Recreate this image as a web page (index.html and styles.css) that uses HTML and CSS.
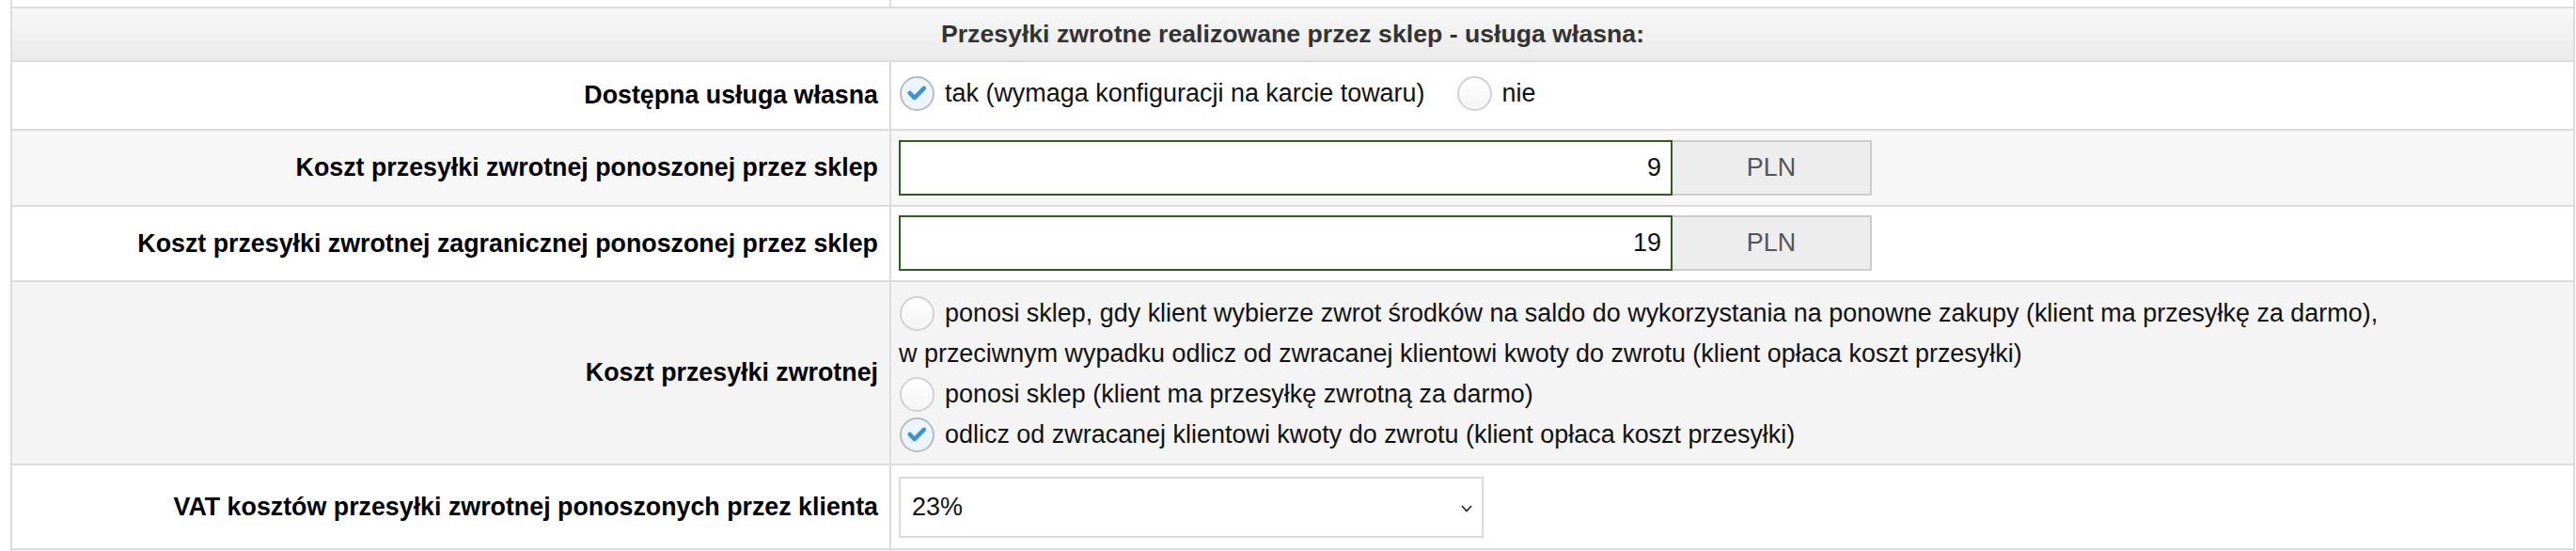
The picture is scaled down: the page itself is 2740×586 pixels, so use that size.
FILE: index.html
```html
<!DOCTYPE html>
<html lang="pl">
<head>
<meta charset="utf-8">
<title>Przesyłki zwrotne</title>
<link rel="stylesheet" href="styles.css">
</head>
<body>
<div class="form">
  <div class="row row-prev">
    <div class="label"></div>
    <div class="value"></div>
  </div>
  <div class="row row-head">
    <div class="head">Przesyłki zwrotne realizowane przez sklep - usługa własna:</div>
  </div>
  <div class="row row-white row-own">
    <div class="label">Dostępna usługa własna</div>
    <div class="value value-inline">
      <label class="opt">
        <span class="radio on"><svg viewBox="0 0 36 36" width="34" height="34"><path d="M9.5 18 L15 23.5 L26 12.5" fill="none" stroke="#3f93cf" stroke-width="5" stroke-linecap="round" stroke-linejoin="round"/></svg></span>
        <span class="opt-text">tak (wymaga konfiguracji na karcie towaru)</span>
      </label>
      <label class="opt">
        <span class="radio"></span>
        <span class="opt-text">nie</span>
      </label>
    </div>
  </div>
  <div class="row row-grey row-cost">
    <div class="label">Koszt przesyłki zwrotnej ponoszonej przez sklep</div>
    <div class="value value-input">
      <div class="field">
        <span class="field-input">9</span>
        <span class="field-unit">PLN</span>
      </div>
    </div>
  </div>
  <div class="row row-white row-cost2">
    <div class="label">Koszt przesyłki zwrotnej zagranicznej ponoszonej przez sklep</div>
    <div class="value value-input">
      <div class="field">
        <span class="field-input">19</span>
        <span class="field-unit">PLN</span>
      </div>
    </div>
  </div>
  <div class="row row-grey2 row-mode">
    <div class="label">Koszt przesyłki zwrotnej</div>
    <div class="value value-stack">
      <label class="opt">
        <span class="radio"></span>
        <span class="opt-text">ponosi sklep, gdy klient wybierze zwrot środków na saldo do wykorzystania na ponowne zakupy (klient ma przesyłkę za darmo),</span>
      </label>
      <div class="cont">w przeciwnym wypadku odlicz od zwracanej klientowi kwoty do zwrotu (klient opłaca koszt przesyłki)</div>
      <label class="opt">
        <span class="radio"></span>
        <span class="opt-text">ponosi sklep (klient ma przesyłkę zwrotną za darmo)</span>
      </label>
      <label class="opt">
        <span class="radio on"><svg viewBox="0 0 36 36" width="34" height="34"><path d="M9.5 18 L15 23.5 L26 12.5" fill="none" stroke="#3f93cf" stroke-width="5" stroke-linecap="round" stroke-linejoin="round"/></svg></span>
        <span class="opt-text">odlicz od zwracanej klientowi kwoty do zwrotu (klient opłaca koszt przesyłki)</span>
      </label>
    </div>
  </div>
  <div class="row row-white row-vat">
    <div class="label">VAT kosztów przesyłki zwrotnej ponoszonych przez klienta</div>
    <div class="value value-select">
      <div class="select">
        <span class="select-text">23%</span>
        <svg class="chev" viewBox="0 0 12 8" width="12" height="8"><path d="M1 1 L6 6.5 L11 1" fill="none" stroke="#222" stroke-width="1.6"/></svg>
      </div>
    </div>
  </div>
  <div class="row row-grey row-next">
    <div class="label"></div>
    <div class="value"></div>
  </div>
</div>
</body>
</html>
```
FILE: styles.css
```css
html, body {
  margin: 0;
  padding: 0;
  background: #fff;
}

body {
  font-family: "Liberation Sans", Arial, Helvetica, sans-serif;
  font-size: 26.67px;
  color: #111;
  overflow: hidden;
}

.form {
  margin-left: 11px;
  width: 2728px;
  box-sizing: border-box;
  border-left: 2px solid #dcdcdc;
  border-right: 2px solid #dcdcdc;
}

.row {
  display: grid;
  grid-template-columns: 935px 1fr;
  box-sizing: border-box;
  border-bottom: 2px solid #dcdcdc;
}

.label {
  box-sizing: border-box;
  border-right: 2px solid #dcdcdc;
  display: flex;
  align-items: center;
  justify-content: flex-end;
  padding-right: 12px;
  font-weight: bold;
  font-size: 26.8px;
  color: #000;
  white-space: nowrap;
}

.value {
  box-sizing: border-box;
  display: flex;
  align-items: center;
  padding-left: 8px;
  font-size: 26.95px;
}

.row-prev { height: 9px; background: #fff; }
.row-next { height: 4px; border-bottom: 0; }

.row-head {
  display: flex;
  height: 57px;
  align-items: center;
  justify-content: center;
  background: linear-gradient(#f7f7f7, #ebebeb);
}

.head {
  font-weight: bold;
  color: #333;
  padding-bottom: 1px;
}

.row-white { background: #fff; }
.row-grey { background: #f7f7f7; }
.row-grey2 { background: #f4f4f4; }

.row-own { height: 73px; }
.row-own .value { padding-bottom: 5px; }

.row-cost { height: 81px; }
.row-cost2 { height: 80px; }
.row-cost .value { padding-top: 10px; padding-bottom: 10px; }
.row-cost2 .value { padding-top: 9px; padding-bottom: 10px; }

.row-mode { height: 195px; }
.value-stack {
  flex-direction: column;
  align-items: flex-start;
  gap: 7px;
  padding-top: 15px;
  padding-bottom: 13px;
}

.row-vat { height: 90px; }
.row-vat .value { padding-top: 12px; padding-bottom: 11px; }

.opt {
  display: flex;
  align-items: center;
  gap: 11px;
  height: 36px;
  margin-left: 1px;
  margin-right: 33px;
  white-space: nowrap;
}

.cont {
  height: 36px;
  display: flex;
  align-items: center;
  white-space: nowrap;
}

.radio {
  flex: none;
  width: 37px;
  height: 37px;
  box-sizing: border-box;
  border: 2px solid #d2d2d2;
  border-radius: 50%;
  background: linear-gradient(#ffffff, #f4f4f4);
  display: flex;
  align-items: center;
  justify-content: center;
}

.radio.on {
  border-color: #b8bdc3;
  background: #edf4fb;
}

.field {
  display: flex;
  height: 59px;
}

.field-input {
  box-sizing: border-box;
  width: 823px;
  height: 59px;
  border: 2px solid #2d5f1c;
  background: #fff;
  display: flex;
  align-items: center;
  justify-content: flex-end;
  padding-right: 10px;
  color: #111;
}

.field-unit {
  box-sizing: border-box;
  width: 212px;
  height: 59px;
  border: 2px solid #cdcdcd;
  border-left: 0;
  background: #ededed;
  color: #555;
  display: flex;
  align-items: center;
  justify-content: center;
}

.select {
  box-sizing: border-box;
  width: 622px;
  height: 65px;
  border: 2px solid #dadada;
  background: #fff;
  display: flex;
  align-items: center;
  justify-content: space-between;
  padding: 0 10px 0 12px;
}

.select-text {
  color: #111;
}

.chev {
  flex: none;
  margin-top: 2px;
}
```
